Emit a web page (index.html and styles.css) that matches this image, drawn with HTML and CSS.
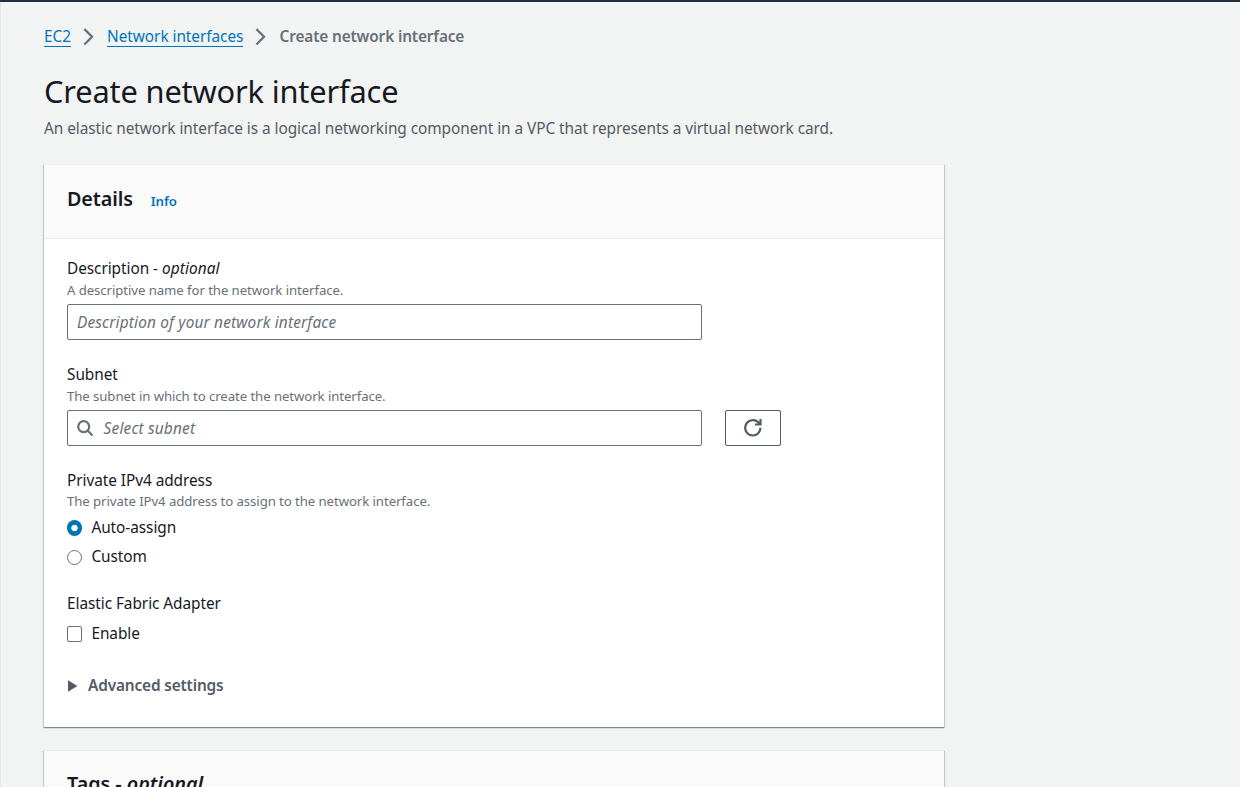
FILE: index.html
```html
<!DOCTYPE html>
<html lang="en">
<head>
<meta charset="utf-8">
<title>Create network interface</title>
<link rel="stylesheet" href="styles.css">
</head>
<body>
<main class="page">
  <nav class="breadcrumbs">
    <a class="crumb crumb-ec2" href="#">EC2</a>
    <svg class="chevron" viewBox="0 0 16 16"><path d="m4 1 7 7-7 7"/></svg>
    <a class="crumb crumb-list" href="#">Network interfaces</a>
    <svg class="chevron" viewBox="0 0 16 16"><path d="m4 1 7 7-7 7"/></svg>
    <span class="current">Create network interface</span>
  </nav>
  <h1 class="title"><span>Create network interface</span></h1>
  <p class="subtitle"><span>An elastic network interface is a logical networking component in a VPC that represents a virtual network card.</span></p>

  <section class="panel">
    <header class="panel-head"><h2 class="heading heading-details">Details</h2><a class="info" href="#">Info</a></header>
    <div class="panel-body">
      <div class="field">
        <div class="label">Description - <em>optional</em></div>
        <div class="hint">A descriptive name for the network interface.</div>
        <div class="input"><span class="placeholder">Description of your network interface</span></div>
      </div>
      <div class="field">
        <div class="label">Subnet</div>
        <div class="hint">The subnet in which to create the network interface.</div>
        <div class="row">
          <div class="input"><svg class="search" viewBox="0 0 16 16"><circle cx="7" cy="7" r="5"/><path d="m15 15-4.5-4.5"/></svg><span class="placeholder">Select subnet</span></div>
          <button class="refresh" aria-label="Refresh"><svg viewBox="0 0 16 16"><path d="M15 8c0 3.87-3.13 7-7 7s-7-3.13-7-7 3.13-7 7-7c2.79 0 5.2 1.63 6.33 4"/><path d="M10 5h5V0"/></svg></button>
        </div>
      </div>
      <div class="field field-ip">
        <div class="label label-ip">Private IPv4 address</div>
        <div class="hint">The private IPv4 address to assign to the network interface.</div>
        <div class="choice choice-auto"><span class="radio radio-on"></span><span>Auto-assign</span></div>
        <div class="choice choice-custom"><span class="radio"></span><span>Custom</span></div>
      </div>
      <div class="field field-efa">
        <div class="label label-efa">Elastic Fabric Adapter</div>
        <div class="choice choice-enable"><span class="checkbox"></span><span>Enable</span></div>
      </div>
      <div class="expand"><svg class="caret" viewBox="0 0 10 12"><path d="M0 0.3 9.4 6 0 11.7z"/></svg><span>Advanced settings</span></div>
    </div>
  </section>

  <section class="panel">
    <header class="panel-head panel-head-tags"><h2 class="heading heading-tags">Tags - <em>optional</em></h2></header>
  </section>
</main>
</body>
</html>
```

FILE: styles.css
```css
* { box-sizing: border-box; }
html, body { height: 100%; }
body {
  margin: 0;
  overflow: hidden;
  background: #f2f3f3;
  border-top: 2px solid #232f3e;
  color: #16191f;
  font: 15.4px/22px "Noto Sans", "Open Sans", sans-serif;
  font-stretch: semi-condensed;
  letter-spacing: -0.064px;
}
.page {
  height: 100%;
  border-left: 1px solid #e5e8e8;
  padding: 24px 0 0 43px;
  overflow: hidden;
}
.breadcrumbs { display: flex; align-items: center; height: 22px; }
.crumb {
  color: #0073bb;
  text-decoration: none;
  border-bottom: 1px solid #0073bb;
  line-height: 20px;
  height: 20px;
  white-space: nowrap;
}
svg { fill: none; stroke: #687078; stroke-width: 2; flex: none; }
.chevron { width: 17.6px; height: 17.6px; margin: 0 9.8px 0 8.8px; }
.current { color: #687078; font-weight: 600; letter-spacing: -0.14px; white-space: nowrap; }
.title { margin: 23px 0 0; font-size: 30.8px; line-height: 40px; font-weight: 400; letter-spacing: -0.17px; }
.subtitle { margin: 7px 0 24px; color: #545b64; white-space: nowrap; }
.panel {
  width: 900px;
  margin-bottom: 23px;
  background: #fff;
  border-top: 1px solid #eaeded;
  box-shadow: 0 1px 1px 0 rgba(0,28,36,.3), 1px 1px 1px 0 rgba(0,28,36,.15), -1px 1px 1px 0 rgba(0,28,36,.15);
}
.panel-head {
  display: flex;
  align-items: baseline;
  gap: 18px;
  height: 74px;
  padding: 20px 23px 0;
  background: #fafafa;
  border-bottom: 1px solid #eaeded;
}
.panel-head-tags { padding-top: 19px; }
.heading { margin: 0; font-size: 19.8px; line-height: 28px; font-weight: 600; letter-spacing: -0.12px; }
.heading-tags { letter-spacing: -0.03px; }
.info { color: #0073bb; font-size: 13.2px; font-weight: 600; text-decoration: none; }
.panel-body { height: 488px; padding: 19px 23px 0; }
.field { margin-bottom: 24px; }
.label { line-height: 22px; }
.label em { letter-spacing: 0.1px; }
.hint { font-size: 13.2px; line-height: 20px; color: #687078; margin-bottom: 4px; letter-spacing: -0.075px; }
.input {
  width: 635px;
  height: 36px;
  display: flex;
  align-items: center;
  padding: 2px 9px 0;
  border: 1px solid #687078;
  border-radius: 2px;
  background: #fff;
  color: #687078;
  font-style: italic;
  letter-spacing: 0.17px;
}
.row { display: flex; gap: 23px; }
.search { width: 17.6px; height: 17.6px; margin: -2px 10px 0 -1px; }
.refresh {
  width: 56px;
  height: 36px;
  padding: 0;
  display: grid;
  place-items: center;
  border: 1px solid #545b64;
  border-radius: 2px;
  background: #fff;
}
.refresh svg { width: 17.6px; height: 17.6px; stroke: #545b64; }
.label-ip + .hint { line-height: 18px; margin-bottom: 7px; }
.choice { display: flex; align-items: center; gap: 9px; height: 22px; }
.radio { width: 15.4px; height: 15.4px; border: 1px solid #687078; border-radius: 50%; background: #fff; }
.radio-on { border: 0; background: radial-gradient(circle, #fff 2.8px, #0073bb 3.6px); }
.checkbox { width: 15.4px; height: 15.4px; border: 1px solid #687078; border-radius: 2px; }
.choice-custom { margin-top: 7px; }
.choice-custom .radio { margin-top: 1px; }
.choice-enable { margin-top: 8px; }
.field-ip { margin-bottom: 25px; }
.expand { display: flex; align-items: center; gap: 10px; margin-top: 30px; color: #545b64; font-weight: 600; letter-spacing: -0.15px; }
.caret { width: 10px; height: 12px; margin: 0 0 0 1px; fill: #545b64; stroke: none; }
```
